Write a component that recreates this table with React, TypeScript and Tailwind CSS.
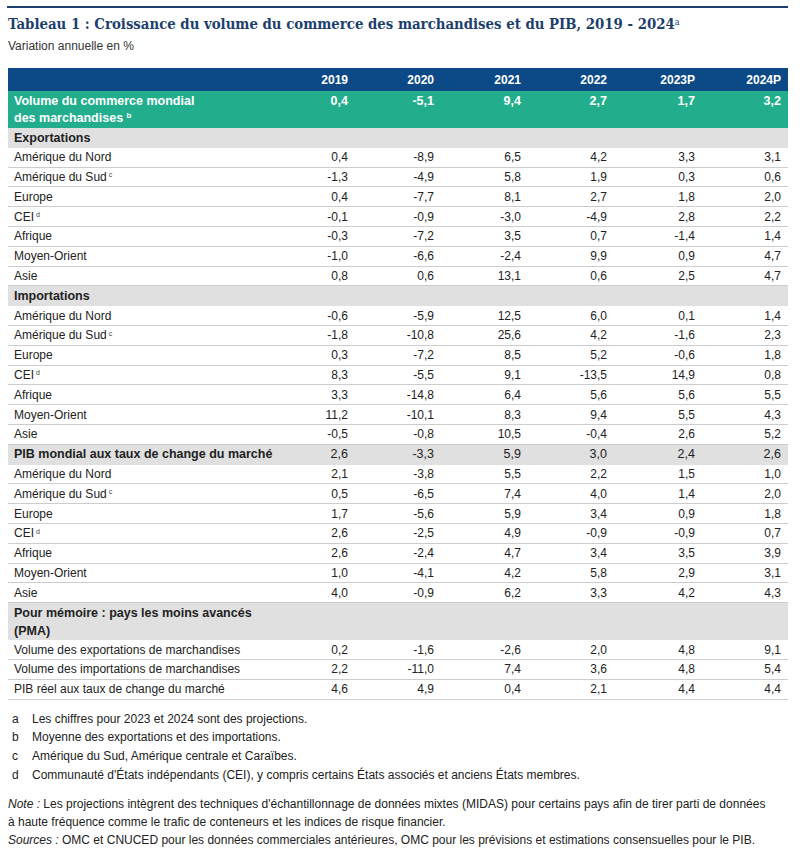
import React from "react";

type Row = { label: string; sup?: string; values: string[] };
type Section = { title: string[]; values?: string[]; rows: Row[] };

const years = ["2019", "2020", "2021", "2022", "2023P", "2024P"];
const cols = "grid grid-cols-[260px_87px_86px_87px_86px_88px_86px]";

const sections: Section[] = [
  {
    title: ["Exportations"],
    rows: [
      { label: "Amérique du Nord", values: ["0,4", "-8,9", "6,5", "4,2", "3,3", "3,1"] },
      { label: "Amérique du Sud", sup: "c", values: ["-1,3", "-4,9", "5,8", "1,9", "0,3", "0,6"] },
      { label: "Europe", values: ["0,4", "-7,7", "8,1", "2,7", "1,8", "2,0"] },
      { label: "CEI", sup: "d", values: ["-0,1", "-0,9", "-3,0", "-4,9", "2,8", "2,2"] },
      { label: "Afrique", values: ["-0,3", "-7,2", "3,5", "0,7", "-1,4", "1,4"] },
      { label: "Moyen-Orient", values: ["-1,0", "-6,6", "-2,4", "9,9", "0,9", "4,7"] },
      { label: "Asie", values: ["0,8", "0,6", "13,1", "0,6", "2,5", "4,7"] },
    ],
  },
  {
    title: ["Importations"],
    rows: [
      { label: "Amérique du Nord", values: ["-0,6", "-5,9", "12,5", "6,0", "0,1", "1,4"] },
      { label: "Amérique du Sud", sup: "c", values: ["-1,8", "-10,8", "25,6", "4,2", "-1,6", "2,3"] },
      { label: "Europe", values: ["0,3", "-7,2", "8,5", "5,2", "-0,6", "1,8"] },
      { label: "CEI", sup: "d", values: ["8,3", "-5,5", "9,1", "-13,5", "14,9", "0,8"] },
      { label: "Afrique", values: ["3,3", "-14,8", "6,4", "5,6", "5,6", "5,5"] },
      { label: "Moyen-Orient", values: ["11,2", "-10,1", "8,3", "9,4", "5,5", "4,3"] },
      { label: "Asie", values: ["-0,5", "-0,8", "10,5", "-0,4", "2,6", "5,2"] },
    ],
  },
  {
    title: ["PIB mondial aux taux de change du marché"],
    values: ["2,6", "-3,3", "5,9", "3,0", "2,4", "2,6"],
    rows: [
      { label: "Amérique du Nord", values: ["2,1", "-3,8", "5,5", "2,2", "1,5", "1,0"] },
      { label: "Amérique du Sud", sup: "c", values: ["0,5", "-6,5", "7,4", "4,0", "1,4", "2,0"] },
      { label: "Europe", values: ["1,7", "-5,6", "5,9", "3,4", "0,9", "1,8"] },
      { label: "CEI", sup: "d", values: ["2,6", "-2,5", "4,9", "-0,9", "-0,9", "0,7"] },
      { label: "Afrique", values: ["2,6", "-2,4", "4,7", "3,4", "3,5", "3,9"] },
      { label: "Moyen-Orient", values: ["1,0", "-4,1", "4,2", "5,8", "2,9", "3,1"] },
      { label: "Asie", values: ["4,0", "-0,9", "6,2", "3,3", "4,2", "4,3"] },
    ],
  },
  {
    title: ["Pour mémoire : pays les moins avancés", "(PMA)"],
    rows: [
      { label: "Volume des exportations de marchandises", values: ["0,2", "-1,6", "-2,6", "2,0", "4,8", "9,1"] },
      { label: "Volume des importations de marchandises", values: ["2,2", "-11,0", "7,4", "3,6", "4,8", "5,4"] },
      { label: "PIB réel aux taux de change du marché", values: ["4,6", "4,9", "0,4", "2,1", "4,4", "4,4"] },
    ],
  },
];

const notes = [
  ["a", "Les chiffres pour 2023 et 2024 sont des projections."],
  ["b", "Moyenne des exportations et des importations."],
  ["c", "Amérique du Sud, Amérique centrale et Caraïbes."],
  ["d", "Communauté d'États indépendants (CEI), y compris certains États associés et anciens États membres."],
];

export default function App() {
  return (
    <div className="w-[800px] h-[854px] bg-white text-[#222] font-['Liberation_Sans',Arial,sans-serif] text-[12px] overflow-hidden pt-[6px]">
      <div className="ml-[7px] w-[781px] border-t-2 border-[#1c3f6e]" />
      <h1 className="ml-[8px] mt-[7px] text-[#1c3f6e] font-['DejaVu_Serif_Condensed','DejaVu_Serif',serif] font-bold text-[14.8px] leading-[18px]">
        Tableau 1 : Croissance du volume du commerce des marchandises et du PIB, 2019 - 2024
        <sup className="text-[9px] font-normal">a</sup>
      </h1>
      <p className="ml-[8px] mt-[6px] text-[#333] leading-[14px]">Variation annuelle en %</p>

      <div className="ml-[8px] mt-[15px] w-[780px]">
        <div className={`${cols} h-[23px] items-center bg-[#0b4a86] text-white font-bold`}>
          <div />
          {years.map((y) => (
            <div key={y} className="text-right pr-[7px]">{y}</div>
          ))}
        </div>
        <div className={`${cols} h-[37px] bg-[#22ae8c] text-white font-bold text-[12.5px] leading-[17px] pt-[2px]`}>
          <div className="pl-[6px]">
            Volume du commerce mondial
            <br />
            des marchandises <sup className="text-[8px]">b</sup>
          </div>
          {["0,4", "-5,1", "9,4", "2,7", "1,7", "3,2"].map((v, i) => (
            <div key={i} className="text-right pr-[7px]">{v}</div>
          ))}
        </div>

        {sections.map((s) => (
          <div key={s.title[0]}>
            <div
              className={`${cols} bg-[#e0e0e0] font-bold text-[12.5px] ${
                s.title.length > 1 ? "h-[37px] leading-[18px] pt-[1px]" : "h-[19.8px] items-center"
              }`}
            >
              <div className="pl-[6px] whitespace-nowrap">
                {s.title.map((t, i) => (
                  <div key={i}>{t}</div>
                ))}
              </div>
              {(s.values ?? ["", "", "", "", "", ""]).map((v, i) => (
                <div key={i} className="text-right pr-[7px] font-normal">{v}</div>
              ))}
            </div>
            {s.rows.map((r) => (
              <div key={r.label} className={`${cols} h-[19.8px] items-center border-b border-[#cdcdcd]`}>
                <div className="pl-[6px]">
                  {r.label}
                  {r.sup && <sup className="text-[7px] ml-[2px] text-[#444]">{r.sup}</sup>}
                </div>
                {r.values.map((v, i) => (
                  <div key={i} className="text-right pr-[7px]">{v}</div>
                ))}
              </div>
            ))}
          </div>
        ))}
      </div>

      <div className="ml-[12px] mt-[10px] leading-[18.8px]">
        {notes.map(([k, t]) => (
          <div key={k} className="flex">
            <span className="w-[20px]">{k}</span>
            <span>{t}</span>
          </div>
        ))}
      </div>

      <div className="ml-[8px] mt-[10px] leading-[18px]">
        <p>
          <i>Note :</i> Les projections intègrent des techniques d'échantillonnage de données mixtes (MIDAS) pour certains pays afin de tirer parti de données
          <br />à haute fréquence comme le trafic de conteneurs et les indices de risque financier.
        </p>
        <p>
          <i>Sources :</i> OMC et CNUCED pour les données commerciales antérieures, OMC pour les prévisions et estimations consensuelles pour le PIB.
        </p>
      </div>
    </div>
  );
}
